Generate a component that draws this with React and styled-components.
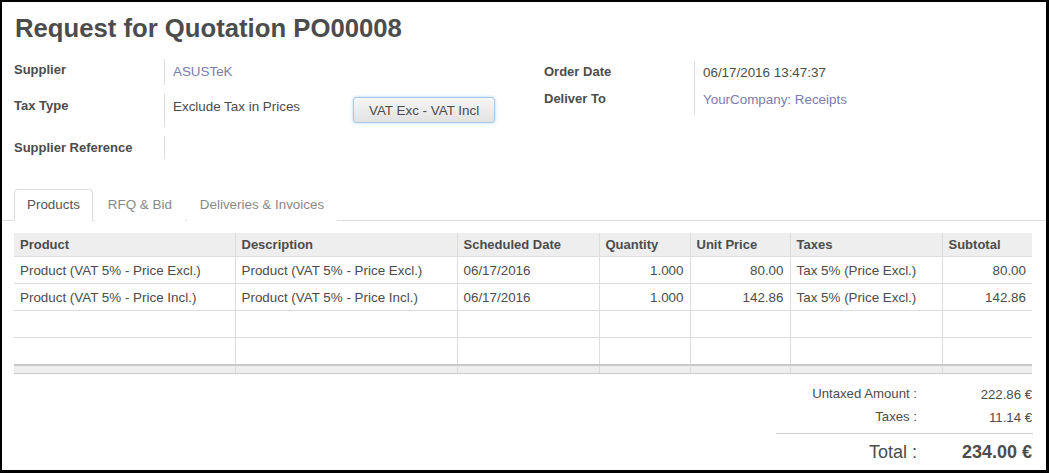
import React from "react";
import styled, { createGlobalStyle } from "styled-components";

const GlobalStyle = createGlobalStyle`
  html, body { margin: 0; padding: 0; background: #000; }
  body { font-family: "Liberation Sans", Arial, Helvetica, sans-serif; font-size: 13.4px; color: #4c4c4c; }
  * { box-sizing: border-box; }
`;

const Frame = styled.div`
  margin: 2px 3px 3px 2px;
  width: 1044px;
  height: 468px;
  background: #fff;
  overflow: hidden;
  padding: 11px 14px 0 12px;
`;

const Title = styled.h1`
  margin: 0;
  font-size: 25.7px;
  line-height: 30px;
  font-weight: bold;
  color: #4c4c4c;
  padding-left: 1px;
`;

const Groups = styled.div`
  display: grid;
  grid-template-columns: 530px 1fr;
  margin-top: 16px;
  align-items: start;
`;

const Group = styled.div`
  display: grid;
  row-gap: ${(p) => p.$gap}px;
  margin-top: ${(p) => p.$offset || 0}px;
`;

const FieldRow = styled.div`
  display: grid;
  grid-template-columns: 150px 1fr;
  height: ${(p) => p.$h}px;
  line-height: 18px;
`;

const Label = styled.div`
  font-weight: bold;
  font-size: 13px;
  padding-top: ${(p) => p.$pt}px;
  color: #4c4c4c;
`;

const Value = styled.div`
  border-left: 1px solid #ddd;
  padding: ${(p) => p.$pt}px 0 0 8px;
  display: flex;
  align-items: flex-start;
  color: ${(p) => (p.$link ? "#7c7bad" : "#4c4c4c")};
`;

const ValueText = styled.span`
  width: 180px;
`;

const ActionButton = styled.button`
  margin-top: -1px;
  height: 26px;
  padding: 0 15px;
  font-family: inherit;
  font-size: 13.4px;
  color: #4c4c4c;
  border: 1px solid #a7c9ec;
  border-radius: 3px;
  background: linear-gradient(#f6f6f6, #e2e2e2);
  box-shadow: 0 0 3px rgba(102, 170, 238, 0.6);
`;

const TabBar = styled.div`
  display: flex;
  margin: 30px -14px 0 -12px;
  padding-left: 12px;
  border-bottom: 1px solid #ddd;
`;

const Tab = styled.div`
  margin-right: 2px;
  margin-bottom: -1px;
  padding: 6px 12px 6px;
  line-height: 18px;
  border: 1px solid transparent;
  border-radius: 4px 4px 0 0;
  background: #fff;
  color: ${(p) => (p.$active ? "#555" : "#888")};
  ${(p) => p.$active && "border-color: #ddd #ddd transparent;"}
`;

const Table = styled.table`
  margin-top: 12px;
  width: 1018px;
  table-layout: fixed;
  border-collapse: collapse;
`;

const Th = styled.th`
  background: #eee;
  text-align: left;
  font-weight: bold;
  font-size: 13px;
  padding: 3px 6px 3px;
  line-height: 17px;
  color: #4c4c4c;
  border-bottom: 1px solid #ddd;
  border-left: 1px solid #ddd;
  white-space: nowrap;
  &:first-child { border-left: none; }
`;

const Td = styled.td`
  padding: 5px 6px 3px;
  line-height: 18px;
  height: 27px;
  text-align: ${(p) => (p.$num ? "right" : "left")};
  border-bottom: 1px solid #ddd;
  border-left: 1px solid #ddd;
  white-space: nowrap;
  color: #4c4c4c;
  &:first-child { border-left: none; }
`;

const FootCell = styled.td`
  height: 9px;
  padding: 0;
  background: #eee;
  border-top: 2px solid #c8c8c8;
  border-bottom: 1px solid #ccc;
  border-left: 1px solid #ddd;
  &:first-child { border-left: none; }
`;

const Totals = styled.div`
  width: 257px;
  margin: 9px -1px 0 auto;
`;

const TotalsRow = styled.div`
  display: grid;
  grid-template-columns: 141px 115px;
  height: ${(p) => (p.$big ? 24 : 23)}px;
  line-height: ${(p) => (p.$big ? 24 : 22)}px;
  font-size: ${(p) => (p.$big ? 18 : 13.2)}px;
`;

const TotalLabel = styled.div`
  text-align: right;
`;

const TotalValue = styled.div`
  text-align: right;
  padding-top: ${(p) => (p.$big ? 0 : 1)}px;
  font-weight: ${(p) => (p.$big ? "bold" : "normal")};
`;

const Divider = styled.div`
  border-top: 1px solid #ccc;
  margin: 4px 0 6px;
`;

const columns = [
  { name: "Product", w: 221 },
  { name: "Description", w: 222 },
  { name: "Scheduled Date", w: 142 },
  { name: "Quantity", w: 91 },
  { name: "Unit Price", w: 100 },
  { name: "Taxes", w: 152 },
  { name: "Subtotal", w: 90 },
];

const rows = [
  ["Product (VAT 5% - Price Excl.)", "Product (VAT 5% - Price Excl.)", "06/17/2016", "1.000", "80.00", "Tax 5% (Price Excl.)", "80.00"],
  ["Product (VAT 5% - Price Incl.)", "Product (VAT 5% - Price Incl.)", "06/17/2016", "1.000", "142.86", "Tax 5% (Price Excl.)", "142.86"],
  ["", "", "", "", "", "", ""],
  ["", "", "", "", "", "", ""],
];

const numCols = [3, 4, 6];

export default function App() {
  return (
    <>
      <GlobalStyle />
      <Frame>
        <Title>Request for Quotation PO00008</Title>
        <Groups>
          <Group $gap={9}>
            <FieldRow $h={26}>
              <Label $pt={2}>Supplier</Label>
              <Value $pt={4} $link>ASUSTeK</Value>
            </FieldRow>
            <FieldRow $h={33}>
              <Label $pt={2.5}>Tax Type</Label>
              <Value $pt={4}>
                <ValueText>Exclude Tax in Prices</ValueText>
                <ActionButton>VAT Exc - VAT Incl</ActionButton>
              </Value>
            </FieldRow>
            <FieldRow $h={23}>
              <Label $pt={2.5}>Supplier Reference</Label>
              <Value $pt={4} />
            </FieldRow>
          </Group>
          <Group $gap={0} $offset={2}>
            <FieldRow $h={27}>
              <Label $pt={1.5}>Order Date</Label>
              <Value $pt={2.5}>06/17/2016 13:47:37</Value>
            </FieldRow>
            <FieldRow $h={26}>
              <Label $pt={1.5}>Deliver To</Label>
              <Value $pt={2.5} $link>YourCompany: Receipts</Value>
            </FieldRow>
          </Group>
        </Groups>
        <TabBar>
          <Tab $active>Products</Tab>
          <Tab>RFQ &amp; Bid</Tab>
          <Tab>Deliveries &amp; Invoices</Tab>
        </TabBar>
        <Table>
          <colgroup>
            {columns.map((c) => (
              <col key={c.name} style={{ width: c.w }} />
            ))}
          </colgroup>
          <thead>
            <tr>
              {columns.map((c) => (
                <Th key={c.name}>{c.name}</Th>
              ))}
            </tr>
          </thead>
          <tbody>
            {rows.map((r, i) => (
              <tr key={i}>
                {r.map((v, j) => (
                  <Td key={j} $num={numCols.includes(j)}>
                    {v}
                  </Td>
                ))}
              </tr>
            ))}
          </tbody>
          <tfoot>
            <tr>
              {columns.map((c) => (
                <FootCell key={c.name} />
              ))}
            </tr>
          </tfoot>
        </Table>
        <Totals>
          <TotalsRow>
            <TotalLabel>Untaxed Amount :</TotalLabel>
            <TotalValue>222.86 €</TotalValue>
          </TotalsRow>
          <TotalsRow>
            <TotalLabel>Taxes :</TotalLabel>
            <TotalValue>11.14 €</TotalValue>
          </TotalsRow>
          <Divider />
          <TotalsRow $big>
            <TotalLabel>Total :</TotalLabel>
            <TotalValue $big>234.00 €</TotalValue>
          </TotalsRow>
        </Totals>
      </Frame>
    </>
  );
}
